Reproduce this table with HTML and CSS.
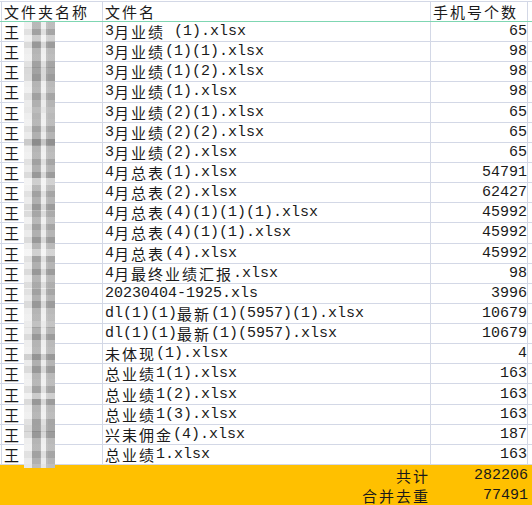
FILE: index.html
```html
<!DOCTYPE html>
<html lang="zh-CN">
<head>
<meta charset="utf-8">
<title>手机号统计</title>
<link rel="stylesheet" href="styles.css">
</head>
<body>
<div class="sheet">
  <div class="row head">
    <div class="lead"></div>
    <div class="cell c1"><span class="c">文件夹名称</span></div>
    <div class="cell c2"><span class="c">文件名</span></div>
    <div class="cell c3 hl"><span class="c">手机号个数</span></div>
    <div class="cell c4"></div>
  </div>
  <div class="body">
    <div class="row"><div class="lead"></div><div class="cell c1"><span class="c">王</span></div><div class="cell c2"><span class="m">3</span><span class="c">月业绩</span><span class="m"> (1).xlsx</span></div><div class="cell c3">65</div><div class="cell c4"></div></div>
    <div class="row"><div class="lead"></div><div class="cell c1"><span class="c">王</span></div><div class="cell c2"><span class="m">3</span><span class="c">月业绩</span><span class="m">(1)(1).xlsx</span></div><div class="cell c3">98</div><div class="cell c4"></div></div>
    <div class="row"><div class="lead"></div><div class="cell c1"><span class="c">王</span></div><div class="cell c2"><span class="m">3</span><span class="c">月业绩</span><span class="m">(1)(2).xlsx</span></div><div class="cell c3">98</div><div class="cell c4"></div></div>
    <div class="row"><div class="lead"></div><div class="cell c1"><span class="c">王</span></div><div class="cell c2"><span class="m">3</span><span class="c">月业绩</span><span class="m">(1).xlsx</span></div><div class="cell c3">98</div><div class="cell c4"></div></div>
    <div class="row"><div class="lead"></div><div class="cell c1"><span class="c">王</span></div><div class="cell c2"><span class="m">3</span><span class="c">月业绩</span><span class="m">(2)(1).xlsx</span></div><div class="cell c3">65</div><div class="cell c4"></div></div>
    <div class="row"><div class="lead"></div><div class="cell c1"><span class="c">王</span></div><div class="cell c2"><span class="m">3</span><span class="c">月业绩</span><span class="m">(2)(2).xlsx</span></div><div class="cell c3">65</div><div class="cell c4"></div></div>
    <div class="row"><div class="lead"></div><div class="cell c1"><span class="c">王</span></div><div class="cell c2"><span class="m">3</span><span class="c">月业绩</span><span class="m">(2).xlsx</span></div><div class="cell c3">65</div><div class="cell c4"></div></div>
    <div class="row"><div class="lead"></div><div class="cell c1"><span class="c">王</span></div><div class="cell c2"><span class="m">4</span><span class="c">月总表</span><span class="m">(1).xlsx</span></div><div class="cell c3">54791</div><div class="cell c4"></div></div>
    <div class="row"><div class="lead"></div><div class="cell c1"><span class="c">王</span></div><div class="cell c2"><span class="m">4</span><span class="c">月总表</span><span class="m">(2).xlsx</span></div><div class="cell c3">62427</div><div class="cell c4"></div></div>
    <div class="row"><div class="lead"></div><div class="cell c1"><span class="c">王</span></div><div class="cell c2"><span class="m">4</span><span class="c">月总表</span><span class="m">(4)(1)(1)(1).xlsx</span></div><div class="cell c3">45992</div><div class="cell c4"></div></div>
    <div class="row"><div class="lead"></div><div class="cell c1"><span class="c">王</span></div><div class="cell c2"><span class="m">4</span><span class="c">月总表</span><span class="m">(4)(1)(1).xlsx</span></div><div class="cell c3">45992</div><div class="cell c4"></div></div>
    <div class="row"><div class="lead"></div><div class="cell c1"><span class="c">王</span></div><div class="cell c2"><span class="m">4</span><span class="c">月总表</span><span class="m">(4).xlsx</span></div><div class="cell c3">45992</div><div class="cell c4"></div></div>
    <div class="row"><div class="lead"></div><div class="cell c1"><span class="c">王</span></div><div class="cell c2"><span class="m">4</span><span class="c">月最终业绩汇报</span><span class="m">.xlsx</span></div><div class="cell c3">98</div><div class="cell c4"></div></div>
    <div class="row"><div class="lead"></div><div class="cell c1"><span class="c">王</span></div><div class="cell c2"><span class="m">20230404-1925.xls</span></div><div class="cell c3">3996</div><div class="cell c4"></div></div>
    <div class="row"><div class="lead"></div><div class="cell c1"><span class="c">王</span></div><div class="cell c2"><span class="m">dl(1)(1)</span><span class="c">最新</span><span class="m">(1)(5957)(1).xlsx</span></div><div class="cell c3">10679</div><div class="cell c4"></div></div>
    <div class="row"><div class="lead"></div><div class="cell c1"><span class="c">王</span></div><div class="cell c2"><span class="m">dl(1)(1)</span><span class="c">最新</span><span class="m">(1)(5957).xlsx</span></div><div class="cell c3">10679</div><div class="cell c4"></div></div>
    <div class="row"><div class="lead"></div><div class="cell c1"><span class="c">王</span></div><div class="cell c2"><span class="c">未体现</span><span class="m">(1).xlsx</span></div><div class="cell c3">4</div><div class="cell c4"></div></div>
    <div class="row"><div class="lead"></div><div class="cell c1"><span class="c">王</span></div><div class="cell c2"><span class="c">总业绩</span><span class="m">1(1).xlsx</span></div><div class="cell c3">163</div><div class="cell c4"></div></div>
    <div class="row"><div class="lead"></div><div class="cell c1"><span class="c">王</span></div><div class="cell c2"><span class="c">总业绩</span><span class="m">1(2).xlsx</span></div><div class="cell c3">163</div><div class="cell c4"></div></div>
    <div class="row"><div class="lead"></div><div class="cell c1"><span class="c">王</span></div><div class="cell c2"><span class="c">总业绩</span><span class="m">1(3).xlsx</span></div><div class="cell c3">163</div><div class="cell c4"></div></div>
    <div class="row"><div class="lead"></div><div class="cell c1"><span class="c">王</span></div><div class="cell c2"><span class="c">兴耒佣金</span><span class="m">(4).xlsx</span></div><div class="cell c3">187</div><div class="cell c4"></div></div>
    <div class="row"><div class="lead"></div><div class="cell c1"><span class="c">王</span></div><div class="cell c2"><span class="c">总业绩</span><span class="m">1.xlsx</span></div><div class="cell c3">163</div><div class="cell c4"></div></div>
  </div>
  <div class="row total"><div class="lead"></div><div class="cell c1"></div><div class="cell c2 r"><span class="c">共计</span></div><div class="cell c3">282206</div><div class="cell c4"></div></div>
  <div class="row total"><div class="lead"></div><div class="cell c1"></div><div class="cell c2 r"><span class="c">合并去重</span></div><div class="cell c3">77491</div><div class="cell c4"></div></div>
  <div class="mosaic"></div>
</div>
</body>
</html>
```
FILE: styles.css
```css
* { box-sizing: border-box; }
html, body { margin: 0; padding: 0; background: #ffffff; }
body {
  width: 532px;
  height: 505px;
  overflow: hidden;
  font-family: "Liberation Mono", "Noto Sans CJK SC", monospace;
  font-size: 15px;
  color: #1a1a1a;
}
.sheet {
  position: relative;
  width: 532px;
  padding-top: 1px;
}
.row {
  display: grid;
  grid-template-columns: 2px 101px 328px 97px 4px;
  align-items: stretch;
  line-height: 19px;
  white-space: pre;
}
.cell, .lead {
  display: flex;
  align-items: center;
  overflow: hidden;
  border-right: 1px solid #d3d8e6;
}
.c4 { border-right: none; }
.cell { padding-left: 2px; }
.c2 { padding-left: 2px; }
.c3 { justify-content: flex-end; padding-left: 0; padding-right: 0; }
.c3.hl { justify-content: flex-start; padding-left: 2px; }
.c { font-family: "Noto Sans CJK SC", sans-serif; letter-spacing: 2px; }
.m { font-family: "Liberation Mono", monospace; }

.head {
  height: 21px;
  border-top: 1px solid #d3d8e6;
  border-bottom: 1px solid #7fd6b2;
}
.body {
  display: grid;
  grid-template-rows: repeat(22, 1fr);
  height: 443px;
}
.body .row { border-bottom: 1px solid #d3d8e6; }

.total {
  height: 20px;
  background: #ffc000;
}
.total .cell, .total .lead { border-right: none; }
.total .c2 { justify-content: flex-end; padding-right: 1px; }

.mosaic {
  position: absolute;
  left: 24px;
  top: 22px;
  width: 31px;
  height: 446px;
  background-color: #d2d2d2;
  background-image:
    repeating-linear-gradient(180deg, transparent 0 13px, rgba(255,255,255,.35) 13px 19.5px, transparent 19.5px 45.5px, rgba(0,0,0,.08) 45.5px 52px, transparent 52px 71.5px),
    linear-gradient(90deg, rgba(255,255,255,.5) 0 8px, rgba(60,60,60,.25) 8px 17px, rgba(255,255,255,.4) 17px 22px, rgba(60,60,60,.22) 22px 31px),
    repeating-linear-gradient(180deg, rgba(255,255,255,.35) 0 6.5px, rgba(0,0,0,.07) 6.5px 13px, rgba(255,255,255,.12) 13px 19.5px, rgba(0,0,0,.13) 19.5px 26px, rgba(255,255,255,.25) 26px 32.5px),
    repeating-linear-gradient(90deg, transparent 0 16px, rgba(255,255,255,.2) 16px 24px, transparent 24px 31px);
}
```
